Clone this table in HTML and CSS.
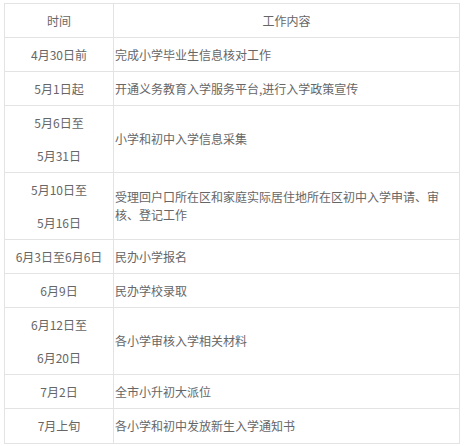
FILE: index.html
```html
<!DOCTYPE html>
<html lang="zh-CN">

<head>
    <meta charset="UTF-8">
    <meta name="viewport" content="width=device-width, initial-scale=1.0">
    <title>入学工作安排</title>
    <link rel="stylesheet" href="styles.css">
</head>

<body>
    <table class="schedule">
        <thead>
            <tr>
                <th class="colDate">时间</th>
                <th class="colWork">工作内容</th>
            </tr>
        </thead>
        <tbody>
            <tr>
                <td class="colDate">4月30日前</td>
                <td class="colWork">完成小学毕业生信息核对工作</td>
            </tr>
            <tr>
                <td class="colDate">5月1日起</td>
                <td class="colWork">开通义务教育入学服务平台,进行入学政策宣传</td>
            </tr>
            <tr class="tall">
                <td class="colDate"><span>5月6日至</span><span>5月31日</span></td>
                <td class="colWork">小学和初中入学信息采集</td>
            </tr>
            <tr class="tall">
                <td class="colDate"><span>5月10日至</span><span>5月16日</span></td>
                <td class="colWork">受理回户口所在区和家庭实际居住地所在区初中入学申请、审核、登记工作</td>
            </tr>
            <tr>
                <td class="colDate">6月3日至6月6日</td>
                <td class="colWork">民办小学报名</td>
            </tr>
            <tr>
                <td class="colDate">6月9日</td>
                <td class="colWork">民办学校录取</td>
            </tr>
            <tr class="tall">
                <td class="colDate"><span>6月12日至</span><span>6月20日</span></td>
                <td class="colWork">各小学审核入学相关材料</td>
            </tr>
            <tr>
                <td class="colDate">7月2日</td>
                <td class="colWork">全市小升初大派位</td>
            </tr>
            <tr class="last">
                <td class="colDate">7月上旬</td>
                <td class="colWork">各小学和初中发放新生入学通知书</td>
            </tr>
        </tbody>
    </table>
</body>

</html>
```

FILE: styles.css
```css
body {
    margin: 0;
    padding: 3px 5px 0 4px;
    background-color: #fff;
    font-family: "Noto Sans CJK SC", "Microsoft YaHei", sans-serif;
    font-size: 12px;
    color: #666;
}

.schedule {
    width: 456px;
    border-collapse: collapse;
    table-layout: fixed;
}

.schedule th,
.schedule td {
    border: 1px solid #e3e3e3;
    height: 33px;
    padding: 0;
    font-weight: normal;
    vertical-align: middle;
    line-height: 18px;
}

.schedule .colDate {
    width: 108px;
    text-align: center;
}

.schedule td.colWork {
    padding: 0 12px 0 1px;
    text-align: left;
}

.schedule th.colWork {
    text-align: center;
}

/* two-line date cells */
.schedule .tall td {
    height: 66px;
}

.schedule .tall .colDate span {
    display: block;
    line-height: 33px;
}

.schedule .last td {
    height: 34px;
}
```
